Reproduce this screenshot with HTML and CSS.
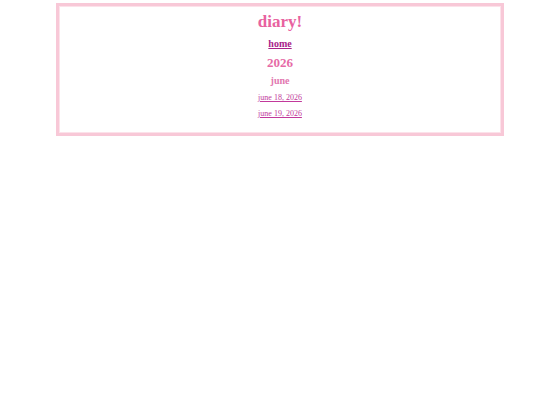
FILE: index.html
```html
<!DOCTYPE html>
<html lang="en">
<head>
<meta charset="utf-8">
<title>diary!</title>
<link rel="stylesheet" href="styles.css">
</head>
<body>
  <main class="diary">
    <h1 class="title">diary!</h1>
    <nav class="nav"><a class="home-link" href="#">home</a></nav>
    <section class="archive">
      <h2 class="year">2026</h2>
      <h3 class="month">june</h3>
      <ul class="entries">
        <li class="entry"><a class="entry-link" href="#">june 18, 2026</a></li>
        <li class="entry"><a class="entry-link" href="#">june 19, 2026</a></li>
      </ul>
    </section>
  </main>
</body>
</html>
```

FILE: styles.css
```css
html, body {
  margin: 0;
  padding: 0;
  background: #ffffff;
}

body {
  font-family: "Liberation Serif", "Times New Roman", serif;
}

.diary {
  margin: 3px 36px 0 56px;
  border: 3px solid #f8c8d7;
  box-shadow: inset 0 0 0 1px #fce2ea;
  padding: 6px 0 15px;
  text-align: center;
  display: flex;
  flex-direction: column;
  align-items: center;
}

.title {
  margin: 0;
  font-size: 17px;
  line-height: 20px;
  font-weight: bold;
  color: #e8629f;
}

.nav {
  margin-top: 6px;
  font-size: 10px;
  line-height: 12px;
}

.home-link {
  font-weight: bold;
  color: #a8228a;
  text-decoration: underline;
}

.archive {
  display: flex;
  flex-direction: column;
  align-items: center;
}

.year {
  margin: 5px 0 0;
  font-size: 13px;
  line-height: 16px;
  font-weight: bold;
  color: #e66aa6;
}

.month {
  margin: 4px 0 0;
  font-size: 10px;
  line-height: 12px;
  font-weight: bold;
  color: #e277b0;
}

.entries {
  list-style: none;
  margin: 6px 0 0;
  padding: 0;
  display: flex;
  flex-direction: column;
  align-items: center;
  gap: 7px;
}

.entry {
  font-size: 8px;
  line-height: 9px;
}

.entry-link {
  color: #c2399b;
  text-decoration: underline;
}
```
